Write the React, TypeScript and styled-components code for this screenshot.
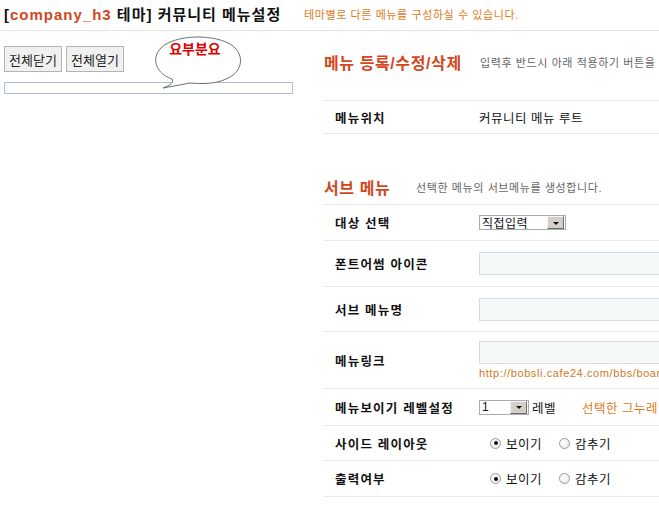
import React from "react";
import styled, { createGlobalStyle } from "styled-components";

const Global = createGlobalStyle`
  html, body { margin: 0; padding: 0; background: #fff; overflow: hidden; }
  body { font-family: "Liberation Sans", "Noto Sans CJK KR", sans-serif; font-size: 12px; color: #111; }
`;

const Page = styled.div`
  width: 960px;
`;

const Header = styled.div`
  display: flex;
  align-items: center;
  height: 30px;
  padding-left: 4px;
  border-bottom: 1px solid #e6e6e6;
`;

const Title = styled.h1`
  margin: 0 0 3px 0;
  width: 300px;
  flex: 0 0 300px;
  font-size: 15px;
  font-weight: bold;
  color: #111;
  letter-spacing: 1px;
  white-space: nowrap;
`;

const Accent = styled.span`
  color: #d4461c;
`;

const HeaderNote = styled.span`
  font-size: 11px;
  color: #e07a1a;
  letter-spacing: 0.6px;
  margin-bottom: 3px;
`;

const Main = styled.div`
  display: flex;
`;

const LeftPanel = styled.div`
  position: relative;
  width: 296px;
  flex: 0 0 296px;
  padding: 15px 0 0 4px;
`;

const ButtonRow = styled.div`
  display: flex;
  gap: 4px;
`;

const Button = styled.button`
  width: 58px;
  height: 26px;
  padding: 0;
  font-family: inherit;
  font-size: 13px;
  color: #222;
  background: #f0f0f0;
  border: 1px solid #b4b4b4;
  border-radius: 0;
`;

const TreeBox = styled.div`
  margin-top: 10px;
  width: 287px;
  height: 10px;
  border: 1px solid #a9bdd4;
`;

const Bubble = styled.svg`
  position: absolute;
  left: 150px;
  top: 3px;
  overflow: visible;
`;

const RightPanel = styled.div`
  padding-left: 24px;
  flex: 1;
`;

const SectionHead = styled.div<{ $top: number; $bottom: number }>`
  display: flex;
  align-items: center;
  height: 20px;
  margin-top: ${(p) => p.$top}px;
  margin-bottom: ${(p) => p.$bottom}px;
`;

const SectionTitle = styled.h2<{ $w: number }>`
  margin: 0;
  width: ${(p) => p.$w}px;
  flex: 0 0 ${(p) => p.$w}px;
  font-size: 16px;
  font-weight: bold;
  color: #d4461c;
  letter-spacing: 0.6px;
  white-space: nowrap;
`;

const SectionDesc = styled.span`
  font-size: 11px;
  color: #666;
  letter-spacing: 0.6px;
  white-space: nowrap;
`;

const Table = styled.div`
  width: 600px;
  border-top: 1px solid #e8e8e8;
`;

const Row = styled.div<{ $h: number }>`
  display: grid;
  grid-template-columns: 155px 1fr;
  align-items: center;
  height: ${(p) => p.$h}px;
  border-bottom: 1px solid #e8e8e8;
`;

const Label = styled.div`
  padding-left: 11px;
  font-weight: bold;
  font-size: 12.5px;
  letter-spacing: 1.2px;
  color: #111;
  white-space: nowrap;
`;

const Value = styled.div`
  display: flex;
  align-items: center;
  font-size: 12.5px;
  letter-spacing: 0.5px;
  color: #111;
  white-space: nowrap;
`;

const Stack = styled.div`
  display: flex;
  flex-direction: column;
  gap: 3px;
`;

const TextInput = styled.div`
  width: 300px;
  height: 21px;
  background: #f4f8f9;
  border: 1px solid #d6dcdf;
`;

const LinkNote = styled.span`
  font-size: 11px;
  letter-spacing: 0.6px;
  color: #cf7a1c;
`;

const SelectBox = styled.div<{ $w: number }>`
  display: inline-flex;
  align-items: center;
  justify-content: space-between;
  box-sizing: border-box;
  width: ${(p) => p.$w}px;
  height: 15px;
  padding: 0 1px 0 2px;
  border: 1px solid #a5acb2;
  background: #fff;
  font-size: 12px;
  color: #111;
`;

const SelectArrow = styled.span`
  display: inline-flex;
  align-items: center;
  justify-content: center;
  width: 15px;
  height: 11px;
  background: #d4d0c8;
  border: 1px solid;
  border-color: #f4f4f4 #6c6c6c #6c6c6c #f4f4f4;
  &::after {
    content: "";
    border-left: 3px solid transparent;
    border-right: 3px solid transparent;
    border-top: 3px solid #111;
    margin-top: 1px;
  }
`;

const Unit = styled.span`
  margin-left: 3px;
`;

const LevelNote = styled.span`
  margin-left: 26px;
  color: #e07a1a;
`;

const RadioGroup = styled.div`
  display: flex;
  align-items: center;
  padding-left: 11px;
`;

const RadioItem = styled.label`
  display: inline-flex;
  align-items: center;
  gap: 5px;
  margin-right: 17px;
  font-size: 12.5px;
  color: #111;
`;

const RadioDot = styled.span<{ $on?: boolean }>`
  position: relative;
  display: inline-block;
  width: 9px;
  height: 9px;
  border-radius: 50%;
  border: 1px solid #9a9a9a;
  background: radial-gradient(circle at 35% 35%, #ffffff, #e6e6e6);
  &::after {
    content: "";
    display: ${(p) => (p.$on ? "block" : "none")};
    position: absolute;
    left: 2.5px;
    top: 2.5px;
    width: 4px;
    height: 4px;
    border-radius: 50%;
    background: #111;
  }
`;

function FakeSelect({ w, text }: { w: number; text: string }) {
  return (
    <SelectBox $w={w}>
      <span>{text}</span>
      <SelectArrow />
    </SelectBox>
  );
}

function Radios() {
  return (
    <RadioGroup>
      <RadioItem>
        <RadioDot $on /> 보이기
      </RadioItem>
      <RadioItem>
        <RadioDot /> 감추기
      </RadioItem>
    </RadioGroup>
  );
}

export default function App() {
  return (
    <Page>
      <Global />
      <Header>
        <Title>
          [<Accent>company_h3</Accent> 테마] 커뮤니티 메뉴설정
        </Title>
        <HeaderNote>테마별로 다른 메뉴를 구성하실 수 있습니다.</HeaderNote>
      </Header>
      <Main>
        <LeftPanel>
          <ButtonRow>
            <Button>전체닫기</Button>
            <Button>전체열기</Button>
          </ButtonRow>
          <TreeBox />
          <Bubble width="96" height="60" viewBox="0 0 96 60">
            <path
              d="M22 45 C 2 38, 0 18, 18 9 C 34 1, 62 1, 78 9 C 96 18, 94 38, 76 45 C 66 50, 52 50, 40 49 L 13 54 C 21 51, 24 48, 22 45 Z"
              fill="#fff"
              stroke="#707070"
              strokeWidth="1"
            />
            <text
              x="45"
              y="20"
              textAnchor="middle"
              fontSize="14"
              fontWeight="bold"
              fill="#e00000"
              fontFamily='"Noto Sans CJK KR", sans-serif'
            >
              요부분요
            </text>
          </Bubble>
        </LeftPanel>
        <RightPanel>
          <SectionHead $top={21} $bottom={28}>
            <SectionTitle $w={156}>메뉴 등록/수정/삭제</SectionTitle>
            <SectionDesc>입력후 반드시 아래 적용하기 버튼을 눌러주세요.</SectionDesc>
          </SectionHead>
          <Table>
            <Row $h={32}>
              <Label>메뉴위치</Label>
              <Value>커뮤니티 메뉴 루트</Value>
            </Row>
          </Table>
          <SectionHead $top={43} $bottom={7}>
            <SectionTitle $w={92}>서브 메뉴</SectionTitle>
            <SectionDesc>선택한 메뉴의 서브메뉴를 생성합니다.</SectionDesc>
          </SectionHead>
          <Table>
            <Row $h={35}>
              <Label>대상 선택</Label>
              <Value>
                <FakeSelect w={87} text="직접입력" />
              </Value>
            </Row>
            <Row $h={45}>
              <Label>폰트어썸 아이콘</Label>
              <Value>
                <TextInput />
              </Value>
            </Row>
            <Row $h={44}>
              <Label>서브 메뉴명</Label>
              <Value>
                <TextInput />
              </Value>
            </Row>
            <Row $h={56}>
              <Label>메뉴링크</Label>
              <Value>
                <Stack>
                  <TextInput />
                  <LinkNote>http://bobsli.cafe24.com/bbs/board.php?bo_table=free</LinkNote>
                </Stack>
              </Value>
            </Row>
            <Row $h={36}>
              <Label>메뉴보이기 레벨설정</Label>
              <Value>
                <FakeSelect w={50} text="1" />
                <Unit>레벨</Unit>
                <LevelNote>선택한 그누레벨 이상만 메뉴가 보입니다.</LevelNote>
              </Value>
            </Row>
            <Row $h={34}>
              <Label>사이드 레이아웃</Label>
              <Value>
                <Radios />
              </Value>
            </Row>
            <Row $h={35}>
              <Label>출력여부</Label>
              <Value>
                <Radios />
              </Value>
            </Row>
          </Table>
        </RightPanel>
      </Main>
    </Page>
  );
}
